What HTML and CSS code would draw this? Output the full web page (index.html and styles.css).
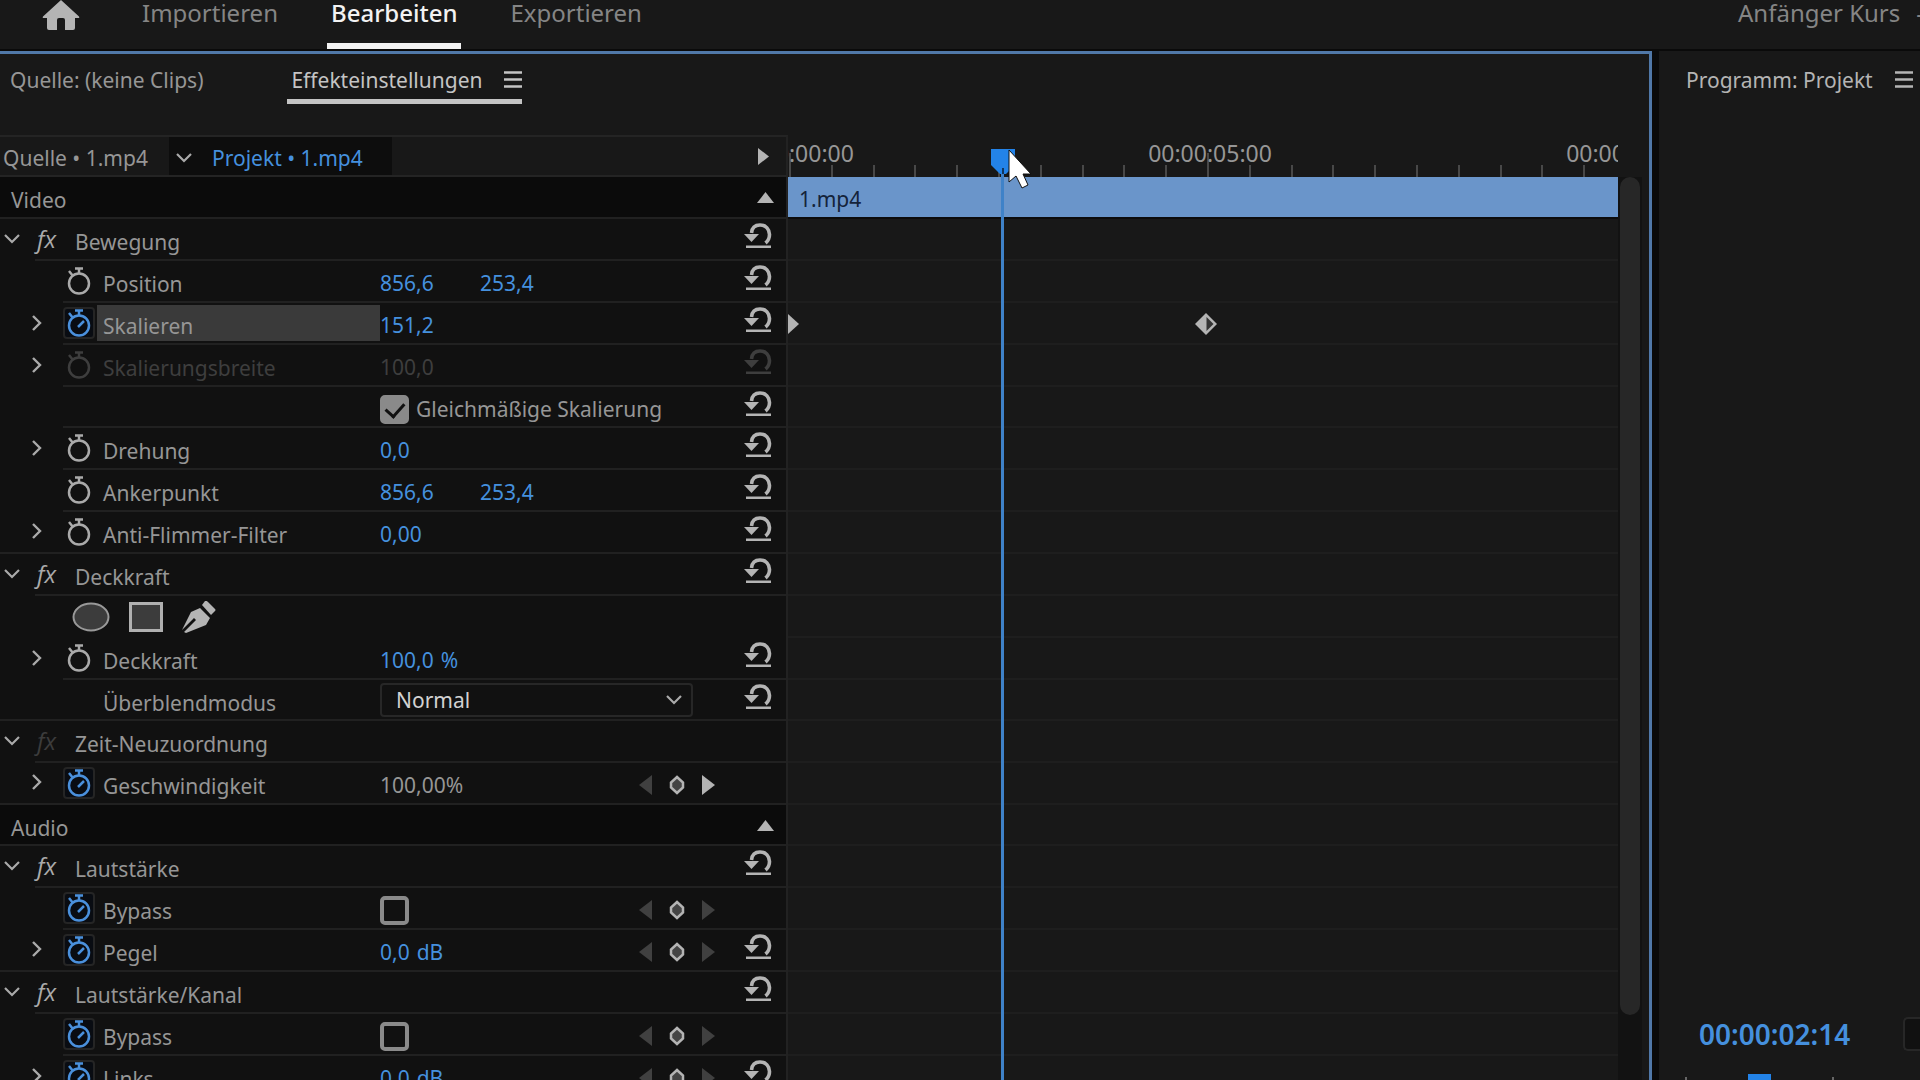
FILE: index.html
```html
<!DOCTYPE html>
<html lang="de">
<head>
    <meta charset="UTF-8">
    <meta name="viewport" content="width=device-width, initial-scale=1.0">
    <title>Effekteinstellungen</title>
    <link rel="stylesheet" href="styles.css">
</head>
<body>
    <!-- Icon sprite -->
    <svg class="sprite" aria-hidden="true">
        <symbol id="home" viewBox="0 0 38 30"><path d="M19 0 1 16.500 Q0 18 2 18H5V28Q5 30 7 30H15V20Q15 18 17 18H21Q23 18 23 20V30H31Q33 30 33 28V18H36Q38 18 37 16.500Z"/></symbol>
        <symbol id="menu" viewBox="0 0 18 17"><path d="M0 1.500H18M0 8.500H18M0 15.500H18" fill="none" stroke="currentColor" stroke-width="2.500"/></symbol>
        <symbol id="down" viewBox="0 0 16 10"><path d="M1 1 8 8 15 1" fill="none" stroke="currentColor" stroke-width="2.200"/></symbol>
        <symbol id="right" viewBox="0 0 10 16"><path d="M1 1 8 8 1 15" fill="none" stroke="currentColor" stroke-width="2.400"/></symbol>
        <symbol id="watch" viewBox="0 0 26 28"><g fill="none" stroke="currentColor" stroke-width="2.500"><circle cx="13" cy="16.500" r="10"/><path d="M9 1.500H17M13 1.500V7M3 4 7 9" /></g></symbol>
        <symbol id="watch-on" viewBox="0 0 26 28"><g fill="none" stroke="currentColor" stroke-width="2.500"><circle cx="13" cy="16.500" r="10"/><path d="M9 1.500H17M13 1.500V7M3 4 7 9M12 18 18 12" /></g></symbol>
        <symbol id="reset" viewBox="0 0 28 26"><path d="M7.500 10C8 4.500 11.500 2 16 2C22 2 25.500 6.500 25.500 11.500C25.500 15 24 18 21.500 20" fill="none" stroke="currentColor" stroke-width="3.600"/><path d="M0 11H15L7.500 19ZM2 22.500H27V25H2Z"/></symbol>
        <symbol id="prev" viewBox="0 0 13 20"><path d="M13 0V20L0 10Z"/></symbol>
        <symbol id="next" viewBox="0 0 13 20"><path d="M0 0V20L13 10Z"/></symbol>
        <symbol id="key" viewBox="0 0 16 20"><path d="M8 2 14 7.500V12.500L8 18 2 12.500V7.500Z" fill="#444" stroke="currentColor" stroke-width="2.500"/></symbol>
        <symbol id="up" viewBox="0 0 17 11"><path d="M8.500 0 17 11H0Z"/></symbol>
        <symbol id="pen" viewBox="0 0 34 32"><path d="M9 11 18 7 28 17 24 24 19 26 4 32 2 31 14 19 12 17 0 29 1 27Z"/><path d="M20 4 23 0Q24-1 26 1L33 8Q34 9 33 10L29 14Z"/></symbol>
    </svg>

    <header class="topbar">
        <a class="home" href="#" aria-label="Startseite"><svg><use href="#home"/></svg></a>
        <nav class="modes">
            <a href="#">Importieren</a>
            <a href="#" class="active">Bearbeiten</a>
            <a href="#">Exportieren</a>
        </nav>
        <div class="project">Anfänger Kurs <span>-</span></div>
    </header>

    <main class="workspace">
        <section class="panel effects-panel">
            <div class="tabs">
                <button class="tab">Quelle: (keine Clips)</button>
                <button class="tab active">Effekteinstellungen <svg class="i-menu"><use href="#menu"/></svg></button>
            </div>

            <div class="effects-body">
                <div class="effects">
                    <div class="row source-row">
                        <div class="props">
                            <button class="source">Quelle • 1.mp4</button>
                            <button class="sequence"><svg class="i-down"><use href="#down"/></svg>Projekt • 1.mp4</button>
                            <button class="icon show-timeline" aria-label="Zeitleiste ausblenden"><svg class="i-tri"><use href="#next"/></svg></button>
                        </div>
                        <div class="ruler">
                            <div class="major"><span>00:00:00:00</span><i></i><i></i><i></i><i></i><i></i><i></i><i></i><i></i><i></i><i></i></div>
                            <div class="major"><span>00:00:05:00</span><i></i><i></i><i></i><i></i><i></i><i></i><i></i><i></i><i></i><i></i></div>
                            <div class="major last"><span>00:00:10:00</span></div>
                        </div>
                    </div>

                    <div class="row section">
                        <div class="props"><h2>Video</h2><button class="icon collapse" aria-label="Einklappen"><svg class="i-up"><use href="#up"/></svg></button></div>
                        <div class="lane clip">1.mp4</div>
                    </div>

                    <div class="row group">
                        <div class="props">
                            <button class="twirl" aria-label="Einklappen"><svg class="i-down"><use href="#down"/></svg></button>
                            <div class="line"><span class="fx">fx</span><span class="name">Bewegung</span><button class="icon reset" aria-label="Zurücksetzen"><svg><use href="#reset"/></svg></button></div>
                        </div>
                        <div class="lane"></div>
                    </div>
                    <div class="row">
                        <div class="props">
                            <span class="twirl"></span>
                            <div class="line"><button class="watch" aria-label="Animation"><svg><use href="#watch"/></svg></button><span class="name">Position</span><span class="values"><button>856,6</button><button>253,4</button></span><button class="icon reset" aria-label="Zurücksetzen"><svg><use href="#reset"/></svg></button></div>
                        </div>
                        <div class="lane"></div>
                    </div>
                    <div class="row selected">
                        <div class="props">
                            <button class="twirl" aria-label="Ausklappen"><svg class="i-right"><use href="#right"/></svg></button>
                            <div class="line"><button class="watch on" aria-label="Animation"><svg><use href="#watch-on"/></svg></button><span class="name">Skalieren</span><span class="values"><button>151,2</button></span><button class="icon reset" aria-label="Zurücksetzen"><svg><use href="#reset"/></svg></button></div>
                        </div>
                        <div class="lane">
                            <svg class="keyframe first" viewBox="0 0 11 22"><path d="M0 1 11 11 0 21Z" fill="#b4b4b4"/></svg>
                            <svg class="keyframe second" viewBox="0 0 24 24"><path d="M12 1 23 12 12 23 1 12Z" fill="#b4b4b4"/><path d="M12.500 5 19.500 12 12.500 19Z" fill="#333"/></svg>
                        </div>
                    </div>
                    <div class="row disabled">
                        <div class="props">
                            <button class="twirl" aria-label="Ausklappen"><svg class="i-right"><use href="#right"/></svg></button>
                            <div class="line"><button class="watch" aria-label="Animation" disabled><svg><use href="#watch"/></svg></button><span class="name">Skalierungsbreite</span><span class="values"><button disabled>100,0</button></span><button class="icon reset" aria-label="Zurücksetzen" disabled><svg><use href="#reset"/></svg></button></div>
                        </div>
                        <div class="lane"></div>
                    </div>
                    <div class="row compact">
                        <div class="props">
                            <span class="twirl"></span>
                            <div class="line"><span class="watch"></span><span class="name"></span><label class="check"><input type="checkbox" checked>Gleichmäßige Skalierung</label><button class="icon reset" aria-label="Zurücksetzen"><svg><use href="#reset"/></svg></button></div>
                        </div>
                        <div class="lane"></div>
                    </div>
                    <div class="row">
                        <div class="props">
                            <button class="twirl" aria-label="Ausklappen"><svg class="i-right"><use href="#right"/></svg></button>
                            <div class="line"><button class="watch" aria-label="Animation"><svg><use href="#watch"/></svg></button><span class="name">Drehung</span><span class="values"><button>0,0</button></span><button class="icon reset" aria-label="Zurücksetzen"><svg><use href="#reset"/></svg></button></div>
                        </div>
                        <div class="lane"></div>
                    </div>
                    <div class="row">
                        <div class="props">
                            <span class="twirl"></span>
                            <div class="line"><button class="watch" aria-label="Animation"><svg><use href="#watch"/></svg></button><span class="name">Ankerpunkt</span><span class="values"><button>856,6</button><button>253,4</button></span><button class="icon reset" aria-label="Zurücksetzen"><svg><use href="#reset"/></svg></button></div>
                        </div>
                        <div class="lane"></div>
                    </div>
                    <div class="row end">
                        <div class="props">
                            <button class="twirl" aria-label="Ausklappen"><svg class="i-right"><use href="#right"/></svg></button>
                            <div class="line"><button class="watch" aria-label="Animation"><svg><use href="#watch"/></svg></button><span class="name">Anti-Flimmer-Filter</span><span class="values"><button>0,00</button></span><button class="icon reset" aria-label="Zurücksetzen"><svg><use href="#reset"/></svg></button></div>
                        </div>
                        <div class="lane"></div>
                    </div>

                    <div class="row group">
                        <div class="props">
                            <button class="twirl" aria-label="Einklappen"><svg class="i-down"><use href="#down"/></svg></button>
                            <div class="line"><span class="fx">fx</span><span class="name">Deckkraft</span><button class="icon reset" aria-label="Zurücksetzen"><svg><use href="#reset"/></svg></button></div>
                        </div>
                        <div class="lane"></div>
                    </div>
                    <div class="row masks">
                        <div class="props">
                            <button class="icon" aria-label="Ellipsenmaske"><svg class="i-mask" viewBox="0 0 38 30"><ellipse cx="19" cy="15" rx="17.500" ry="13.500" fill="#3c3c3c" stroke="#999" stroke-width="2"/></svg></button>
                            <button class="icon" aria-label="Rechteckmaske"><svg class="i-mask" viewBox="0 0 38 30"><rect x="3.500" y="1.500" width="31" height="27" fill="#3c3c3c" stroke="#b0b0b0" stroke-width="3"/></svg></button>
                            <button class="icon" aria-label="Zeichenstift"><svg class="i-pen"><use href="#pen"/></svg></button>
                        </div>
                        <div class="lane"></div>
                    </div>
                    <div class="row">
                        <div class="props">
                            <button class="twirl" aria-label="Ausklappen"><svg class="i-right"><use href="#right"/></svg></button>
                            <div class="line"><button class="watch" aria-label="Animation"><svg><use href="#watch"/></svg></button><span class="name">Deckkraft</span><span class="values unit"><button>100,0</button><span>%</span></span><button class="icon reset" aria-label="Zurücksetzen"><svg><use href="#reset"/></svg></button></div>
                        </div>
                        <div class="lane"></div>
                    </div>
                    <div class="row compact end">
                        <div class="props">
                            <span class="twirl"></span>
                            <div class="line"><span class="watch"></span><label class="name" for="blend">Überblendmodus</label><span class="select"><select id="blend"><option>Normal</option></select><svg class="i-down"><use href="#down"/></svg></span><button class="icon reset" aria-label="Zurücksetzen"><svg><use href="#reset"/></svg></button></div>
                        </div>
                        <div class="lane"></div>
                    </div>

                    <div class="row group">
                        <div class="props">
                            <button class="twirl" aria-label="Einklappen"><svg class="i-down"><use href="#down"/></svg></button>
                            <div class="line"><span class="fx off">fx</span><span class="name">Zeit-Neuzuordnung</span></div>
                        </div>
                        <div class="lane"></div>
                    </div>
                    <div class="row end">
                        <div class="props">
                            <button class="twirl" aria-label="Ausklappen"><svg class="i-right"><use href="#right"/></svg></button>
                            <div class="line"><button class="watch on" aria-label="Animation"><svg><use href="#watch-on"/></svg></button><span class="name">Geschwindigkeit</span><span class="values static">100,00%</span>
                                <span class="keys"><button disabled aria-label="Vorheriger Keyframe"><svg class="i-nav"><use href="#prev"/></svg></button><button aria-label="Keyframe"><svg class="i-key"><use href="#key"/></svg></button><button aria-label="Nächster Keyframe"><svg class="i-nav"><use href="#next"/></svg></button></span><span class="reset"></span></div>
                        </div>
                        <div class="lane"></div>
                    </div>

                    <div class="row section compact">
                        <div class="props"><h2>Audio</h2><button class="icon collapse" aria-label="Einklappen"><svg class="i-up"><use href="#up"/></svg></button></div>
                        <div class="lane"></div>
                    </div>

                    <div class="row group">
                        <div class="props">
                            <button class="twirl" aria-label="Einklappen"><svg class="i-down"><use href="#down"/></svg></button>
                            <div class="line"><span class="fx">fx</span><span class="name">Lautstärke</span><button class="icon reset" aria-label="Zurücksetzen"><svg><use href="#reset"/></svg></button></div>
                        </div>
                        <div class="lane"></div>
                    </div>
                    <div class="row">
                        <div class="props">
                            <span class="twirl"></span>
                            <div class="line"><button class="watch on" aria-label="Animation"><svg><use href="#watch-on"/></svg></button><label class="name" for="bypass1">Bypass</label><span class="check"><input type="checkbox" id="bypass1"></span>
                                <span class="keys"><button disabled aria-label="Vorheriger Keyframe"><svg class="i-nav"><use href="#prev"/></svg></button><button aria-label="Keyframe"><svg class="i-key"><use href="#key"/></svg></button><button disabled aria-label="Nächster Keyframe"><svg class="i-nav"><use href="#next"/></svg></button></span><span class="reset"></span></div>
                        </div>
                        <div class="lane"></div>
                    </div>
                    <div class="row end">
                        <div class="props">
                            <button class="twirl" aria-label="Ausklappen"><svg class="i-right"><use href="#right"/></svg></button>
                            <div class="line"><button class="watch on" aria-label="Animation"><svg><use href="#watch-on"/></svg></button><span class="name">Pegel</span><span class="values unit"><button>0,0</button><span>dB</span></span>
                                <span class="keys"><button disabled aria-label="Vorheriger Keyframe"><svg class="i-nav"><use href="#prev"/></svg></button><button aria-label="Keyframe"><svg class="i-key"><use href="#key"/></svg></button><button disabled aria-label="Nächster Keyframe"><svg class="i-nav"><use href="#next"/></svg></button></span><button class="icon reset" aria-label="Zurücksetzen"><svg><use href="#reset"/></svg></button></div>
                        </div>
                        <div class="lane"></div>
                    </div>

                    <div class="row group">
                        <div class="props">
                            <button class="twirl" aria-label="Einklappen"><svg class="i-down"><use href="#down"/></svg></button>
                            <div class="line"><span class="fx">fx</span><span class="name">Lautstärke/Kanal</span><button class="icon reset" aria-label="Zurücksetzen"><svg><use href="#reset"/></svg></button></div>
                        </div>
                        <div class="lane"></div>
                    </div>
                    <div class="row">
                        <div class="props">
                            <span class="twirl"></span>
                            <div class="line"><button class="watch on" aria-label="Animation"><svg><use href="#watch-on"/></svg></button><label class="name" for="bypass2">Bypass</label><span class="check"><input type="checkbox" id="bypass2"></span>
                                <span class="keys"><button disabled aria-label="Vorheriger Keyframe"><svg class="i-nav"><use href="#prev"/></svg></button><button aria-label="Keyframe"><svg class="i-key"><use href="#key"/></svg></button><button disabled aria-label="Nächster Keyframe"><svg class="i-nav"><use href="#next"/></svg></button></span><span class="reset"></span></div>
                        </div>
                        <div class="lane"></div>
                    </div>
                    <div class="row">
                        <div class="props">
                            <button class="twirl" aria-label="Ausklappen"><svg class="i-right"><use href="#right"/></svg></button>
                            <div class="line"><button class="watch on" aria-label="Animation"><svg><use href="#watch-on"/></svg></button><span class="name">Links</span><span class="values unit"><button>0,0</button><span>dB</span></span>
                                <span class="keys"><button disabled aria-label="Vorheriger Keyframe"><svg class="i-nav"><use href="#prev"/></svg></button><button aria-label="Keyframe"><svg class="i-key"><use href="#key"/></svg></button><button disabled aria-label="Nächster Keyframe"><svg class="i-nav"><use href="#next"/></svg></button></span><button class="icon reset" aria-label="Zurücksetzen"><svg><use href="#reset"/></svg></button></div>
                        </div>
                        <div class="lane"></div>
                    </div>

                    <div class="playhead">
                        <svg viewBox="0 0 24 25"><path d="M0 0H24V16L15 25H9L0 16Z" fill="#2383e8"/><path d="M12 19V25" stroke="#12365e" stroke-width="2"/></svg>
                    </div>
                    <svg class="cursor" viewBox="0 0 24 40"><path d="M1 1V33L8 27L14 39L20 36L15 25H23Z" fill="#fff" stroke="#111" stroke-width="1"/></svg>
                </div>
                <div class="scrollbar"><div class="thumb"></div></div>
            </div>
        </section>

        <section class="panel program-panel">
            <div class="tabs">
                <button class="tab title">Programm: Projekt <svg class="i-menu"><use href="#menu"/></svg></button>
            </div>
            <div class="monitor"></div>
            <div class="transport">
                <button class="timecode">00:00:02:14</button>
                <button class="zoom-select" aria-label="Zoomstufe"></button>
            </div>
            <div class="scrubber"><i></i><b></b><i></i></div>
        </section>
    </main>
</body>
</html>
```

FILE: styles.css
```css
* {
    margin: 0;
    padding: 0;
    box-sizing: border-box;
}

body {
    font-family: "Noto Sans", sans-serif;
    font-size: 21px;
    line-height: 28px;
    background-color: #0a0a0a;
    color: #969696;
    height: 100vh;
    display: flex;
    flex-direction: column;
    overflow: hidden;
}

button, select {
    font: inherit;
    color: inherit;
    background: none;
    border: none;
    white-space: nowrap;
}

a {
    color: inherit;
    text-decoration: none;
}

h2 {
    font-size: 21px;
    font-weight: normal;
}

svg {
    display: block;
    fill: currentColor;
    flex-shrink: 0;
}

.sprite {
    display: none;
}

/* Top bar */
.topbar {
    flex: none;
    display: flex;
    height: 49px;
    padding: 0 18px 0 42px;
    background-color: #181818;
    font-size: 24px;
    line-height: 26px;
    color: #858585;
}

.home svg {
    width: 38px;
    height: 30px;
    color: #b4b4b4;
}

.modes {
    display: flex;
    gap: 45px;
    margin-left: 58px;
    flex: 1;
}

.modes a {
    padding: 0 4px;
    border-bottom: 6px solid transparent;
}

.modes .active {
    color: #f2f2f2;
    font-weight: 500;
    border-color: #f2f2f2;
}

.project {
    display: flex;
    gap: 16px;
    margin-right: -22px;
}

/* Panels */
.workspace {
    flex: 1;
    min-height: 0;
    display: flex;
    gap: 7px;
    padding-top: 2px;
}

.panel {
    display: flex;
    flex-direction: column;
    background-color: #181818;
    min-width: 0;
    overflow: hidden;
}

.effects-panel {
    flex: 1;
    border: solid #5078a8;
    border-width: 3px 3px 0 0;
}

.program-panel {
    width: 261px;
    padding-top: 3px;
}

.tabs {
    flex: none;
    display: flex;
    gap: 84px;
    height: 81px;
    padding: 11px 6px 31px;
}

.tab {
    display: flex;
    align-items: center;
    gap: 22px;
    padding: 0 0 5px 4px;
    border-bottom: 5px solid transparent;
    height: 39px;
}

.tab.active {
    color: #c4c4c4;
    border-color: #c4c4c4;
}

.tab.title {
    color: #b4b4b4;
    padding-left: 21px;
}

.i-menu {
    width: 18px;
    height: 17px;
}

.effects-body {
    flex: 1;
    min-height: 0;
    display: flex;
}

.effects {
    position: relative;
    flex: 1;
    min-width: 0;
}

/* Rows: properties on the left, timeline lane on the right */
.row {
    display: flex;
    height: 42px;
}

.row.compact {
    height: 41px;
}

.props {
    flex: none;
    display: flex;
    width: 788px;
    background-color: #111;
    border-right: 2px solid #222;
}

.lane {
    flex: 1;
    min-width: 0;
    position: relative;
    border-bottom: 2px solid #1e1e1e;
}

.line {
    flex: 1;
    display: flex;
    align-items: center;
    border-bottom: 2px solid #212121;
}

.end .twirl {
    border-bottom: 2px solid #212121;
}

.twirl {
    flex: none;
    display: flex;
    align-items: center;
    justify-content: flex-end;
    width: 63px;
    padding: 0 21px 3px 0;
    color: #aaa;
}

.group .twirl {
    width: 35px;
    padding: 0 15px 3px 0;
}

.i-down {
    width: 16px;
    height: 10px;
}

.i-right {
    width: 10px;
    height: 16px;
}

.icon {
    color: #b4b4b4;
}

.fx {
    width: 40px;
    padding-left: 2px;
    font-family: "Open Sans", sans-serif;
    font-size: 24px;
    font-style: italic;
    font-weight: 500;
    color: #aaa;
}

.fx.off {
    color: #3c3c3c;
}

.name {
    width: 283px;
    height: 36px;
    padding: 7px 0 0 6px;
    line-height: 28px;
}

.group .name {
    padding-left: 0;
}

.selected .name {
    background-color: #3a3a3a;
}

.watch {
    flex: none;
    display: flex;
    align-items: center;
    justify-content: center;
    width: 32px;
    height: 32px;
    margin-right: 2px;
    color: #aaa;
}

.watch svg {
    width: 26px;
    height: 28px;
}

.watch.on {
    color: #4a90dc;
    background-color: #090c12;
    border: 2px solid #252525;
    border-radius: 4px;
}

.values {
    display: flex;
    align-items: center;
    padding-top: 3px;
    color: #4590de;
}

.values button {
    width: 100px;
    text-align: left;
}

.values.unit {
    gap: 7px;
}

.values.unit button {
    width: auto;
}

.values.static {
    color: #969696;
}

.disabled .line,
.disabled .values,
.disabled .watch,
.disabled .icon {
    color: #3e3e3e;
}

.keys {
    display: flex;
    align-items: center;
    gap: 16px;
    margin-left: auto;
    padding-top: 4px;
    color: #b4b4b4;
}

.keys button:disabled {
    color: #404040;
}

.i-nav {
    width: 13px;
    height: 20px;
}

.i-key {
    width: 18px;
    height: 20px;
}

.reset {
    flex: none;
    width: 28px;
    height: 26px;
    margin: 0 14px 6px auto;
}

.keys + .reset {
    margin-left: 29px;
}

.reset svg {
    width: 28px;
    height: 26px;
}

.check {
    display: flex;
    align-items: center;
    gap: 7px;
    padding-top: 5px;
}

.check input {
    appearance: none;
    display: grid;
    place-items: center;
    width: 29px;
    height: 29px;
    border: 4px solid #8a8a8a;
    border-radius: 5px;
}

.check input:checked {
    background-color: #8a8a8a;
}

.check input:checked::before {
    content: "";
    width: 9px;
    height: 15px;
    margin-bottom: 4px;
    border: solid #111;
    border-width: 0 3px 3px 0;
    transform: rotate(42deg);
}

.select {
    display: grid;
    align-items: center;
    width: 313px;
    height: 34px;
}

.select select,
.select svg {
    grid-area: 1 / 1;
}

.select select {
    appearance: none;
    height: 34px;
    padding-left: 14px;
    border: 2px solid #272727;
    border-radius: 4px;
    color: #d2d2d2;
}

.select svg {
    justify-self: end;
    margin-right: 11px;
    color: #aaa;
    pointer-events: none;
}

.masks .props {
    align-items: center;
    gap: 17px;
    padding-left: 72px;
}

.i-mask {
    width: 38px;
    height: 30px;
}

.i-pen {
    width: 34px;
    height: 32px;
}

/* Section headers */
.section .props {
    align-items: center;
    justify-content: space-between;
    padding: 6px 12px 0 11px;
    background-color: #0b0b0b;
    border-bottom: 2px solid #212121;
}

.i-up {
    width: 17px;
    height: 11px;
    margin-bottom: 5px;
}

.clip {
    padding: 8px 0 0 11px;
    background-color: #6a95ca;
    background-clip: padding-box;
    border-color: #0c0c0c;
    color: #14233a;
    line-height: 28px;
}

/* Source row and ruler */
.source-row .props {
    background-color: #181818;
    border-top: 2px solid #242424;
    border-bottom: 2px solid #242424;
}

.source {
    width: 169px;
    padding: 4px 0 0 3px;
    text-align: left;
}

.sequence {
    display: flex;
    align-items: center;
    gap: 20px;
    width: 223px;
    padding: 4px 0 0 7px;
    background-color: #0d0d0d;
    color: #4590de;
}

.sequence svg {
    color: #aaa;
}

.show-timeline {
    margin-left: auto;
    padding-right: 17px;
}

.i-tri {
    width: 11px;
    height: 19px;
}

.ruler {
    flex: 1;
    min-width: 0;
    display: flex;
    padding-left: 1px;
    overflow: hidden;
    font-size: 23px;
}

.major {
    position: relative;
    flex: none;
    display: flex;
    align-items: flex-end;
    width: 418px;
}

.major i {
    flex: 1;
    height: 12px;
    border-left: 2px solid #484848;
}

.major i:first-of-type {
    height: 24px;
}

.major.last {
    width: 0;
}

.major span {
    position: absolute;
    left: 3px;
    top: 4px;
    transform: translateX(-50%);
}

.keyframe {
    position: absolute;
}

.keyframe.first {
    left: 0;
    top: 10px;
    width: 11px;
    height: 22px;
}

.keyframe.second {
    left: 406px;
    top: 9px;
    width: 24px;
    height: 24px;
}

.playhead {
    position: absolute;
    left: 1001px;
    top: 36px;
    bottom: 0;
    width: 3px;
    background-color: #3f82c8;
}

.playhead svg {
    position: absolute;
    left: -10px;
    top: -22px;
    width: 24px;
    height: 25px;
}

.cursor {
    position: absolute;
    left: 1008px;
    top: 14px;
    width: 24px;
    height: 40px;
}

.scrollbar {
    width: 31px;
    margin-top: 42px;
    padding: 0 9px 65px 2px;
    background: linear-gradient(to right, #121212 24px, #181818 24px);
}

.thumb {
    height: 100%;
    border-radius: 10px;
    background-color: #272727;
}

/* Program monitor */
.monitor {
    flex: 1;
}

.transport {
    display: flex;
    align-items: center;
    justify-content: space-between;
    height: 42px;
    padding-left: 40px;
}

.timecode {
    font-size: 28px;
    font-weight: 600;
    color: #4590de;
}

.zoom-select {
    width: 17px;
    height: 34px;
    border: solid #272727;
    border-width: 2px 0 2px 2px;
    border-radius: 5px 0 0 5px;
    background-color: #111;
}

.scrubber {
    display: flex;
    align-items: flex-end;
    gap: 61px;
    height: 25px;
    padding-left: 26px;
}

.scrubber i {
    width: 2px;
    height: 3px;
    background-color: #666;
}

.scrubber b {
    width: 23px;
    height: 6px;
    background-color: #2383e8;
}
```
